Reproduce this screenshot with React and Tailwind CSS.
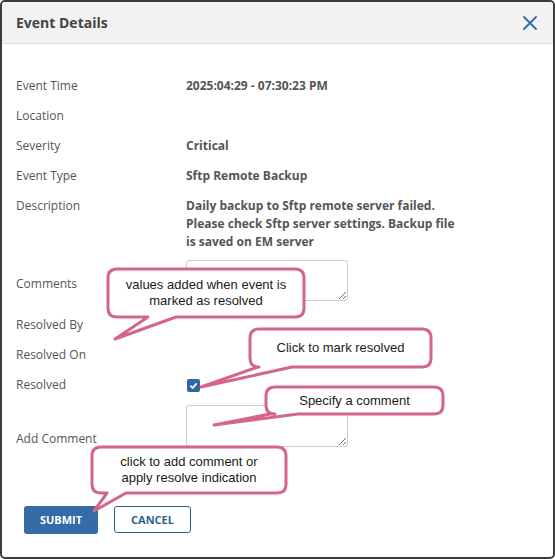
import React from 'react';

// callout bubbles: box + tail (base on bottom edge, tip point)
const callouts = [
  { x: 108, y: 269, w: 196, h: 48, base: [148, 176], tip: [115, 339], lines: ['values added when event is', 'marked as resolved'] },
  { x: 250, y: 329, w: 181, h: 38, base: [258, 292], tip: [201, 387], lines: ['Click to mark resolved'] },
  { x: 266, y: 387, w: 177, h: 27, base: [270, 298], tip: [214, 425], lines: ['Specify a comment'] },
  { x: 92, y: 447, w: 194, h: 46, base: [107, 126], tip: [94, 511], lines: ['click to add comment or', 'apply resolve indication'] },
];

function bubblePath({ x, y, w, h, base, tip }) {
  const r = 9;
  const b = y + h;
  return `M${x + r},${y} H${x + w - r} Q${x + w},${y} ${x + w},${y + r} V${b - r} Q${x + w},${b} ${x + w - r},${b} H${base[1]} L${tip[0]},${tip[1]} L${base[0]},${b} H${x + r} Q${x},${b} ${x},${b - r} V${y + r} Q${x},${y} ${x + r},${y} Z`;
}

const rows = [
  ['Event Time', '2025:04:29 - 07:30:23 PM'],
  ['Location', ''],
  ['Severity', 'Critical'],
  ['Event Type', 'Sftp Remote Backup'],
];

function App() {
  return (
    <div className="relative w-[555px] h-[559px] bg-white overflow-hidden" style={{ fontFamily: '"Open Sans", "Liberation Sans", sans-serif' }}>
      <div className="w-full h-full border-2 border-[#3c3c3c] rounded-[5px] flex flex-col overflow-hidden">
        {/* header */}
        <div className="h-[42px] bg-[#f2f2f2] border-b border-[#dcdcdc] flex items-center justify-between pl-[14px] pr-[15px]">
          <h2 className="text-[14px] font-bold text-[#444]">Event Details</h2>
          <svg width="16" height="16" viewBox="0 0 16 16" className="text-[#3470a6]">
            <path d="M2 2 L14 14 M14 2 L2 14" stroke="currentColor" strokeWidth="2" strokeLinecap="round" />
          </svg>
        </div>

        {/* body */}
        <div className="pt-[27px] pl-[14px] text-[12px] leading-[18px] text-[#555]">
          {rows.map(([label, value]) => (
            <div key={label} className="flex h-[30px] py-[6px]">
              <div className="w-[170px]">{label}</div>
              <div className="font-bold">{value}</div>
            </div>
          ))}

          <div className="flex py-[6px]">
            <div className="w-[170px]">Description</div>
            <div className="font-bold w-[272px]">
              Daily backup to Sftp remote server failed. Please check Sftp server settings. Backup file is saved on EM server
            </div>
          </div>

          <div className="flex h-[53px]">
            <div className="w-[170px] pt-[18px]">Comments</div>
            <textarea className="mt-[3px] w-[162px] h-[41px] border border-[#ccc] rounded-[3px] resize-y" />
          </div>

          <div className="flex h-[30px] py-[6px]">
            <div className="w-[170px]">Resolved By</div>
          </div>
          <div className="flex h-[30px] py-[6px]">
            <div className="w-[170px]">Resolved On</div>
          </div>
          <div className="flex h-[30px] py-[6px] items-center">
            <div className="w-[170px]">Resolved</div>
            <span className="ml-[1px] w-[13px] h-[13px] rounded-[2px] bg-[#2f67a3] flex items-center justify-center">
              <svg width="9" height="9" viewBox="0 0 10 10">
                <path d="M1.5 5.2 L4 7.6 L8.6 2.6" stroke="white" strokeWidth="2" fill="none" />
              </svg>
            </span>
          </div>

          <div className="flex h-[52px]">
            <div className="w-[170px] pt-[30px]">Add Comment</div>
            <textarea className="mt-[5px] w-[162px] h-[42px] border border-[#ccc] rounded-[3px] resize-y" />
          </div>

          <div className="flex gap-[16px] mt-[54px] pl-[8px]">
            <button className="w-[74px] h-[28px] bg-[#336ca7] text-white text-[11px] font-bold rounded-[3px]">SUBMIT</button>
            <button className="w-[77px] h-[27px] bg-white border border-[#2d5f91] text-[#2d5f91] text-[11px] font-bold rounded-[3px]">CANCEL</button>
          </div>
        </div>
      </div>

      {/* annotation callouts */}
      <svg className="absolute inset-0 pointer-events-none" width="555" height="559">
        {callouts.map((c, i) => (
          <path key={i} d={bubblePath(c)} fill="white" stroke="#d4658f" strokeWidth="3" strokeLinejoin="round" />
        ))}
      </svg>
      {callouts.map((c, i) => (
        <div
          key={i}
          className="absolute flex flex-col items-center justify-center text-[13px] leading-[16px] text-[#1a1a1a]"
          style={{ left: c.x, top: c.y, width: c.w, height: c.h, fontFamily: '"Liberation Sans", Arial, sans-serif' }}
        >
          {c.lines.map((l) => (
            <div key={l}>{l}</div>
          ))}
        </div>
      ))}
    </div>
  );
}

export default App;
